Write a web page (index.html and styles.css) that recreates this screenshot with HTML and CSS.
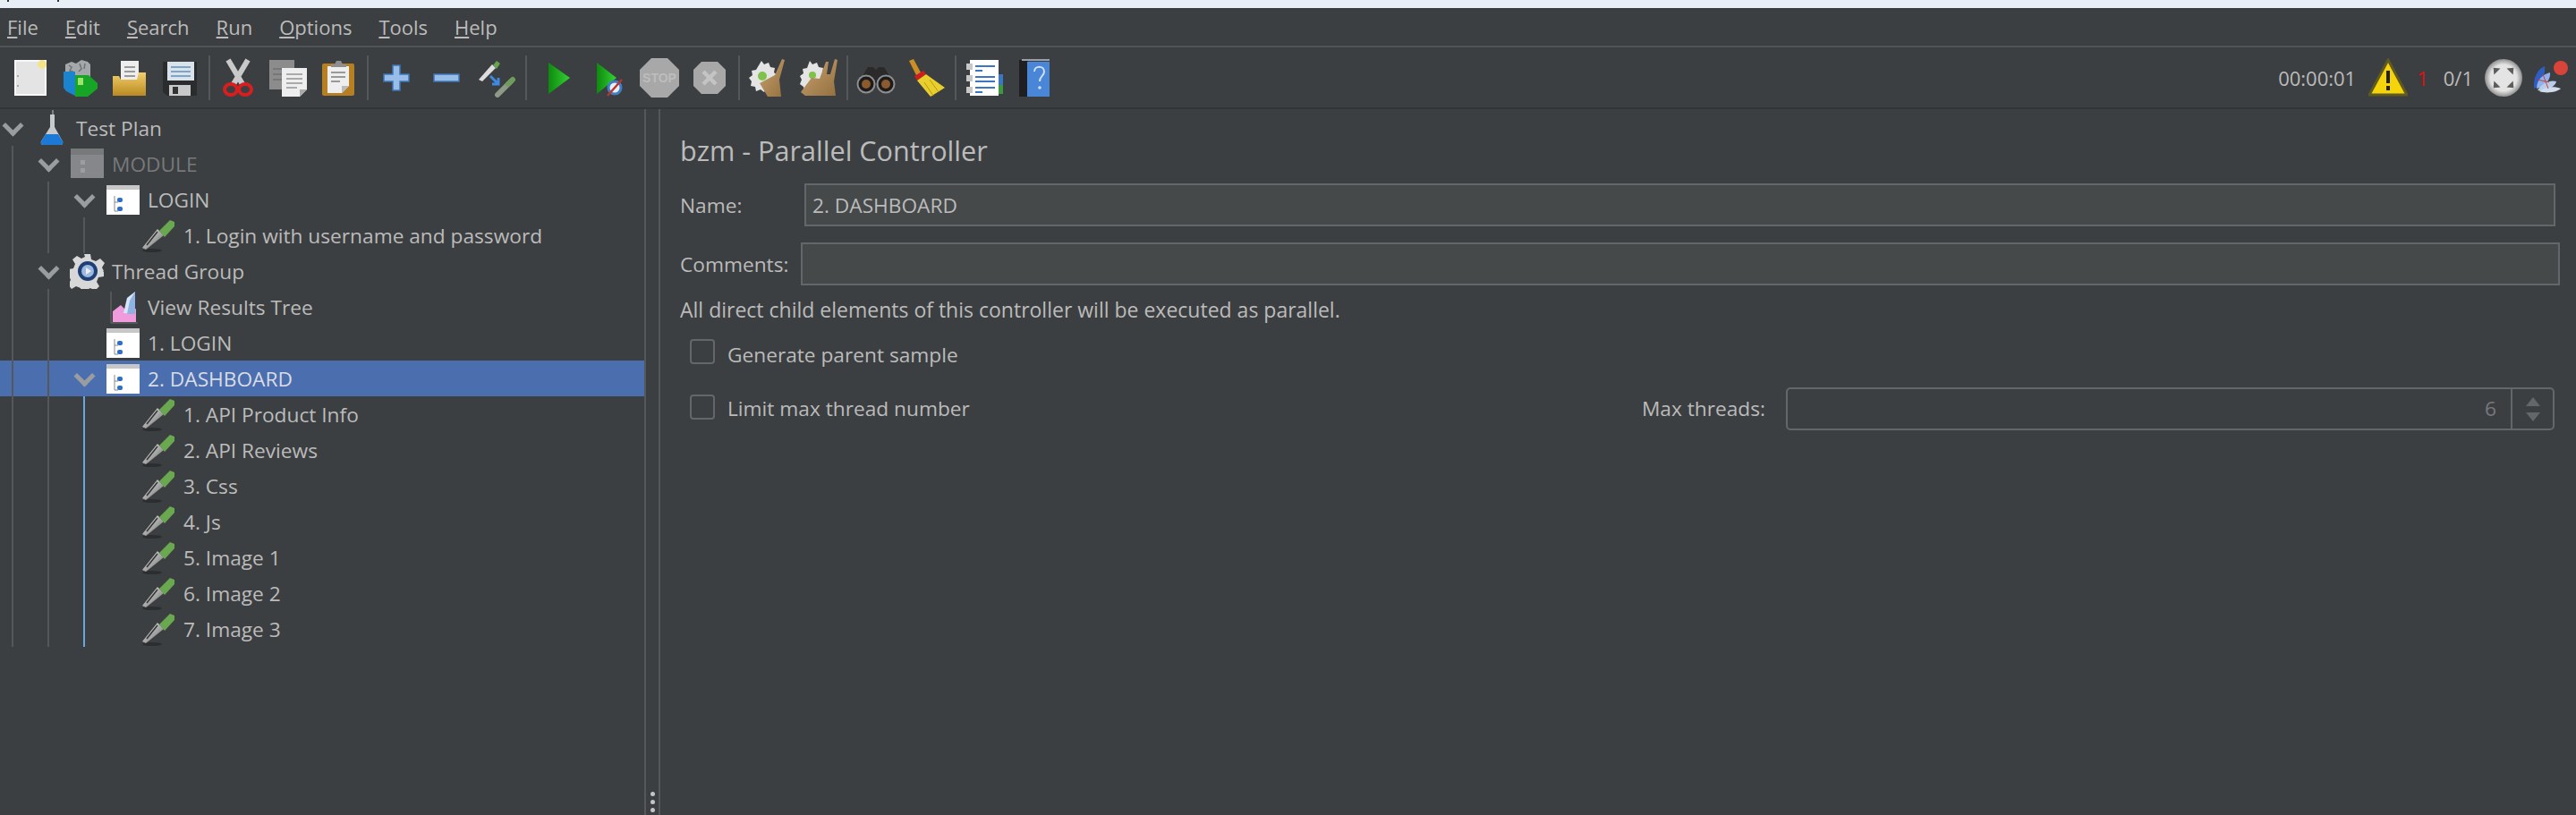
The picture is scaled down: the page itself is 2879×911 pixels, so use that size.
FILE: index.html
```html
<!DOCTYPE html>
<html lang="en">
<head>
    <meta charset="UTF-8">
    <title>bzm - Parallel Controller</title>
    <link rel="stylesheet" href="styles.css">
</head>
<body>
    <svg class="defs" xmlns="http://www.w3.org/2000/svg">
        <defs>
            <linearGradient id="gFolder" x1="0" y1="0" x2="0" y2="1"><stop offset="0" stop-color="#f3cf6b"/><stop offset="1" stop-color="#b98a22"/></linearGradient>
            <linearGradient id="gPlay" x1="0" y1="0" x2="1" y2="0"><stop offset="0" stop-color="#0d8a0d"/><stop offset="1" stop-color="#35d135"/></linearGradient>
            <linearGradient id="gWood" x1="0" y1="0" x2="1" y2="1"><stop offset="0" stop-color="#c9a271"/><stop offset="1" stop-color="#94703f"/></linearGradient>
            <linearGradient id="gGlass" x1="0" y1="0" x2="1" y2="1"><stop offset="0" stop-color="#eeeeee"/><stop offset="1" stop-color="#666666"/></linearGradient>
            <radialGradient id="gBall"><stop offset="0.7" stop-color="#e4e4e4"/><stop offset="1" stop-color="#8f8f8f"/></radialGradient>

            <symbol id="i-new" viewBox="0 0 44 44">
                <rect x="6" y="3" width="34" height="38" fill="#e4e4e4" stroke="#f8f8f8" stroke-width="2"/>
                <circle cx="9" cy="20" r="1" fill="#999"/><circle cx="9" cy="31" r="1" fill="#999"/>
                <circle cx="36" cy="7" r="5" fill="#f3e48b"/>
            </symbol>
            <symbol id="i-template" viewBox="0 0 44 44">
                <path d="M6 7l7-3 5 2 6-4 7 2 3 3v16H6z" fill="#a4a8ab"/>
                <path d="M10 8l3 2-2 4 3 1-2 4" fill="none" stroke="#6f7275" stroke-width="1.5"/>
                <path d="M22 6l2 6-3 3M28 6l-1 6" fill="none" stroke="#6f7275" stroke-width="1.5"/>
                <path d="M4 15h13v27L7 37 4 33z" fill="#1b84cf"/>
                <path d="M17 19h15l10 9v6l-11 9H17z" fill="#17a526"/>
                <rect x="20" y="22" width="6" height="8" fill="#9fe36f"/>
            </symbol>
            <symbol id="i-open" viewBox="0 0 44 44">
                <rect x="12" y="3" width="20" height="24" fill="#eeeeee"/>
                <path d="M16 10h12M16 15h12M16 20h12" stroke="#999" stroke-width="2"/>
                <path d="M3 20h7l2 4h18l2-8h8v26H3z" fill="url(#gFolder)"/>
            </symbol>
            <symbol id="i-save" viewBox="0 0 44 44">
                <path d="M3 4h38v38H8l-5-4z" fill="#2b2c2e"/>
                <rect x="8" y="4" width="30" height="21" fill="#dbe3ea"/>
                <path d="M12 10h22M12 15h22M12 20h22" stroke="#7ea4c8" stroke-width="2"/>
                <rect x="10" y="30" width="24" height="12" fill="#c9c9c9"/>
                <rect x="14" y="32" width="6" height="8" fill="#333"/>
            </symbol>
            <symbol id="i-cut" viewBox="0 0 44 44">
                <path d="M11 2l16 27M33 2L17 29" stroke="#c9c9c9" stroke-width="6"/>
                <ellipse cx="14" cy="35" rx="7" ry="6" fill="none" stroke="#d81e1e" stroke-width="4"/>
                <ellipse cx="30" cy="35" rx="7" ry="6" fill="none" stroke="#d81e1e" stroke-width="4"/>
            </symbol>
            <symbol id="i-copy" viewBox="0 0 44 44">
                <rect x="1" y="2" width="28" height="33" fill="#8c8c8c"/>
                <path d="M5 12h20M5 18h20M5 24h20" stroke="#777" stroke-width="2"/>
                <path d="M15 11h28v24l-8 8H15z" fill="#eeeeee"/>
                <path d="M20 18h18M20 23h18M20 28h18M20 33h12" stroke="#aaa" stroke-width="2"/>
                <path d="M35 43v-8h8z" fill="#aaa"/>
            </symbol>
            <symbol id="i-paste" viewBox="0 0 44 44">
                <rect x="4" y="6" width="36" height="36" rx="2" fill="#b57f22"/>
                <path d="M10 9h24v22l-8 8H10z" fill="#eeeeee"/>
                <path d="M14 16h16M14 21h16M14 26h10" stroke="#999" stroke-width="2"/>
                <path d="M26 39v-8h8z" fill="#bbb"/>
                <path d="M14 10V7h4l2-4h5l2 4h4v3z" fill="#8e8e8e"/>
            </symbol>
            <symbol id="i-plus" viewBox="0 0 44 44">
                <path d="M18 8h8v10h10v8H26v10h-8V26H8v-8h10z" fill="#98bde8" stroke="#3f76b5" stroke-width="1.5"/>
            </symbol>
            <symbol id="i-minus" viewBox="0 0 44 44">
                <rect x="8" y="18" width="28" height="8" fill="#98bde8" stroke="#3f76b5" stroke-width="1.5"/>
            </symbol>
            <symbol id="i-toggle" viewBox="0 0 44 44">
                <path d="M2 24L17 7l4 4L6 26z" fill="#dddddd"/>
                <path d="M18 8l4-5 4 3-4 6z" fill="#68a34f"/>
                <path d="M15 20l9 9M24 22v7h-7" fill="none" stroke="#3f8ae0" stroke-width="3"/>
                <path d="M23 41l15-15" stroke="#8e9a86" stroke-width="6" stroke-linecap="round"/>
                <path d="M35 29l5-5" stroke="#6f9c5a" stroke-width="6" stroke-linecap="round"/>
            </symbol>
            <symbol id="i-play" viewBox="0 0 44 44">
                <path d="M10 5l24 17-24 18z" fill="url(#gPlay)"/>
            </symbol>
            <symbol id="i-playx" viewBox="0 0 44 44">
                <path d="M8 5l22 17-22 18z" fill="url(#gPlay)"/>
                <circle cx="28" cy="33" r="8" fill="#e8eef5"/>
                <circle cx="28" cy="33" r="7" fill="none" stroke="#3f7ec4" stroke-width="3"/>
                <path d="M20 42l16-18" stroke="#b8342c" stroke-width="2.5"/>
            </symbol>
            <symbol id="i-stop" viewBox="0 0 44 44">
                <path d="M13 0h18l13 13v18L31 44H13L0 31V13z" fill="#a8a8a8"/>
                <text x="22" y="27" text-anchor="middle" class="stop-text">STOP</text>
            </symbol>
            <symbol id="i-shut" viewBox="0 0 44 44">
                <path d="M13 4h18l9 9v18l-9 9H13l-9-9V13z" fill="#a8a8a8"/>
                <path d="M15 15l14 14M29 15L15 29" stroke="#c4c4c4" stroke-width="4.5"/>
            </symbol>
            <symbol id="i-clear" viewBox="0 0 44 44">
                <path d="M15 3l3 4 5-2 2 5 5 1-1 5 4 3-3 4 2 5-5 2-1 5-5-1-3 4-4-3-5 2-1-5-5-1 1-5-3-4 4-3-1-5 5-1z" fill="#e4e4e4"/>
                <circle cx="16" cy="20" r="5" fill="#7fc24a"/>
                <path d="M38 1l3 1-6 22 2 19H22L13 28l17-9z" fill="url(#gWood)"/>
            </symbol>
            <symbol id="i-clearall" viewBox="0 0 44 44">
                <path d="M13 3l3 4 5-2 2 5 5 1-1 5 4 3-3 4 2 5-5 2-1 5-5-1-3 4-4-3-5 2-1-5-4-3 2-5-2-4 4-3-1-5 5-1z" fill="#e4e4e4"/>
                <circle cx="16" cy="19" r="4" fill="#7fc24a"/>
                <path d="M41 1l3 1-4 24 2 16H8L3 38l12-16 9 1 7-19 3 0-2 14 4 0z" fill="url(#gWood)"/>
            </symbol>
            <symbol id="i-search" viewBox="0 0 44 44">
                <path d="M13 10h6l3 3 3-3h6l11 18H2z" fill="#2a2a2a"/>
                <circle cx="11" cy="29" r="9.5" fill="#1c1c1c" stroke="#8e8e8e" stroke-width="2"/>
                <circle cx="33" cy="29" r="9.5" fill="#1c1c1c" stroke="#8e8e8e" stroke-width="2"/>
                <circle cx="11" cy="29" r="5" fill="#8d5a2e"/>
                <circle cx="33" cy="29" r="5" fill="#8d5a2e"/>
            </symbol>
            <symbol id="i-broom" viewBox="0 0 44 44">
                <path d="M3 3l5-2 9 17-5 3z" fill="#c98f25"/>
                <path d="M9 20l10-6 3 4-10 7z" fill="#cc1e1e"/>
                <path d="M12 25l10-7 21 15-16 10z" fill="#e9cf2d"/>
                <path d="M20 27l10 15M26 24l10 14" stroke="#b99a13" stroke-width="1"/>
            </symbol>
            <symbol id="i-log" viewBox="0 0 44 44">
                <rect x="36" y="18" width="7" height="12" fill="#3a76c4"/>
                <rect x="36" y="30" width="7" height="10" fill="#3c9a3c"/>
                <rect x="6" y="2" width="32" height="40" fill="#ffffff"/>
                <path d="M12 9h22M12 14h8M12 21h22M12 26h22M12 33h22M12 38h8" stroke="#3a76c4" stroke-width="2"/>
                <rect x="2" y="6" width="7" height="7" fill="#c8c8c8"/>
                <rect x="2" y="19" width="7" height="7" fill="#c8c8c8"/>
                <rect x="2" y="32" width="7" height="7" fill="#c8c8c8"/>
            </symbol>
            <symbol id="i-help" viewBox="0 0 44 44">
                <rect x="5" y="2" width="10" height="41" fill="#1d1f22"/>
                <rect x="14" y="4" width="25" height="39" fill="#4a86d8"/>
                <rect x="8" y="1" width="31" height="2" fill="#9aa0a6"/>
                <path d="M22 15c0-7 11-7 11 0 0 5-5 5-5 11" fill="none" stroke="#cfe0f6" stroke-width="2"/>
                <circle cx="28" cy="33" r="1.8" fill="#cfe0f6"/>
            </symbol>
            <symbol id="i-warn" viewBox="0 0 44 44">
                <path d="M22 2L43 41H1z" fill="#f6d40c" stroke="#5f5a20" stroke-width="3"/>
                <path d="M22 14v14" stroke="#222" stroke-width="4"/>
                <rect x="20" y="31" width="4" height="5" fill="#222"/>
            </symbol>
            <symbol id="i-ball" viewBox="0 0 44 44">
                <circle cx="22" cy="22" r="21" fill="url(#gBall)"/>
                <path d="M22 6l5 6H17zM22 38l5-6H17zM6 22l6-5v10zM38 22l-6-5v10z" fill="#5c5c5c" transform="rotate(45 22 22)"/>
            </symbol>
            <symbol id="i-feather" viewBox="0 0 44 44">
                <path d="M2 34C1 22 6 12 14 9c1 9-3 22-12 25z" fill="#2f5dc2"/>
                <path d="M5 34c0-10 7-16 15-18 1 7-5 16-15 18z" fill="#8fb2ea"/>
                <path d="M6 36c5-8 14-12 21-10-1 6-12 12-21 10z" fill="#b9cdea"/>
                <path d="M8 37c6-5 17-6 24-3-4 4-16 6-24 3z" fill="#cfdceb"/>
                <path d="M6 24l13 3M12 18l6 16" stroke="#c8413a" stroke-width="1"/>
                <circle cx="32" cy="11" r="8" fill="#d9443a"/>
            </symbol>

            <symbol id="t-flask" viewBox="0 0 40 40">
                <path d="M21 0v6" stroke="#999" stroke-width="1.5"/>
                <path d="M18 5h5v14l9 16c1 3-1 4-3 4H11c-2 0-4-1-3-4l10-16z" fill="#c6cacd"/>
                <path d="M13 27h14l5 8c1 3-1 4-3 4H11c-2 0-4-1-3-4z" fill="#1c79d6"/>
            </symbol>
            <symbol id="t-module" viewBox="0 0 40 40">
                <rect x="1" y="3" width="37" height="33" fill="#85878a"/>
                <rect x="1" y="3" width="37" height="7" fill="#77797b"/>
                <path d="M12 16h5v5h-5zM12 25h5v5h-5z" fill="#9b9d9f"/>
            </symbol>
            <symbol id="t-ctrl" viewBox="0 0 40 40">
                <rect x="1" y="4" width="37" height="33" fill="#ffffff"/>
                <rect x="1" y="4" width="37" height="5" fill="#c7c7c7"/>
                <path d="M10 16v17h4M10 23h4" fill="none" stroke="#888" stroke-width="1"/>
                <rect x="13" y="18" width="6" height="5" rx="2" fill="#2c6fc9"/>
                <rect x="13" y="28" width="6" height="5" rx="2" fill="#2c6fc9"/>
            </symbol>
            <symbol id="t-dropper" viewBox="0 0 40 40">
                <ellipse cx="12" cy="37" rx="11" ry="2" fill="#2c2d2e"/>
                <path d="M1 34L18 13l7 7L5 36z" fill="url(#gGlass)"/>
                <path d="M6 31L18 16" stroke="#333" stroke-width="1.5"/>
                <path d="M20 15L32 3l5 2v5L26 22z" fill="#69a84f"/>
            </symbol>
            <symbol id="t-gear" viewBox="0 0 40 40">
                <path d="M16 1h7l1 6 5 2 5-3 5 5-3 5 2 4h-1l1 1v5l-6 1-2 5 3 5-5 5-5-3-4 2-1 3h-5l-1-5-5-2-5 3-4-5 3-5-2-5-1-1v-6l6-1 2-5-3-5 5-4 5 3 4-2z" fill="#d8d8d8"/>
                <circle cx="20" cy="20" r="11" fill="#1f3f78"/>
                <circle cx="20" cy="20" r="7" fill="#9fb9de"/>
                <path d="M18 16l6 4-6 4z" fill="#e9f0fa"/>
            </symbol>
            <symbol id="t-results" viewBox="0 0 40 40">
                <path d="M6 3v35h30" fill="none" stroke="#6d6f71" stroke-width="1"/>
                <path d="M8 37V25l9-7 7 7 10-3v15z" fill="#ef9bdc"/>
                <path d="M20 27l4-17 9-7v25z" fill="#d6e6f8"/>
                <path d="M24 28l3-15 6-10v25z" fill="#8fb2e0"/>
            </symbol>
        </defs>
    </svg>

    <div class="top-strip"><i></i><i></i></div>

    <div class="menubar">
        <span><u>F</u>ile</span>
        <span><u>E</u>dit</span>
        <span><u>S</u>earch</span>
        <span><u>R</u>un</span>
        <span><u>O</u>ptions</span>
        <span><u>T</u>ools</span>
        <span><u>H</u>elp</span>
    </div>

    <div class="toolbar">
        <div class="tool"><svg><use href="#i-new"/></svg></div>
        <div class="tool"><svg><use href="#i-template"/></svg></div>
        <div class="tool"><svg><use href="#i-open"/></svg></div>
        <div class="tool"><svg><use href="#i-save"/></svg></div>
        <div class="sep"></div>
        <div class="tool"><svg><use href="#i-cut"/></svg></div>
        <div class="tool"><svg><use href="#i-copy"/></svg></div>
        <div class="tool"><svg><use href="#i-paste"/></svg></div>
        <div class="sep"></div>
        <div class="tool"><svg><use href="#i-plus"/></svg></div>
        <div class="tool"><svg><use href="#i-minus"/></svg></div>
        <div class="tool"><svg><use href="#i-toggle"/></svg></div>
        <div class="sep sep-wide"></div>
        <div class="tool"><svg><use href="#i-play"/></svg></div>
        <div class="tool"><svg><use href="#i-playx"/></svg></div>
        <div class="tool"><svg><use href="#i-stop"/></svg></div>
        <div class="tool"><svg><use href="#i-shut"/></svg></div>
        <div class="sep"></div>
        <div class="tool"><svg><use href="#i-clear"/></svg></div>
        <div class="tool"><svg><use href="#i-clearall"/></svg></div>
        <div class="sep"></div>
        <div class="tool"><svg><use href="#i-search"/></svg></div>
        <div class="tool"><svg><use href="#i-broom"/></svg></div>
        <div class="sep"></div>
        <div class="tool"><svg><use href="#i-log"/></svg></div>
        <div class="tool"><svg><use href="#i-help"/></svg></div>

        <div class="status">
            <span class="timer">00:00:01</span>
            <svg class="stat-icon"><use href="#i-warn"/></svg>
            <span class="err-count">1</span>
            <span class="threads">0/1</span>
            <svg class="stat-icon"><use href="#i-ball"/></svg>
            <svg class="stat-icon"><use href="#i-feather"/></svg>
        </div>
    </div>

    <div class="workspace">
        <div class="tree">
            <div class="guide g1"></div>
            <div class="guide g2"></div>
            <div class="guide g3"></div>
            <div class="guide g4"></div>
            <div class="guide g5"></div>

            <div class="row"><span class="chev"></span><svg class="ti"><use href="#t-flask"/></svg><span>Test Plan</span></div>
            <div class="row l1 off"><span class="chev"></span><svg class="ti"><use href="#t-module"/></svg><span>MODULE</span></div>
            <div class="row l2"><span class="chev"></span><svg class="ti"><use href="#t-ctrl"/></svg><span>LOGIN</span></div>
            <div class="row l3 leaf"><span class="chev"></span><svg class="ti"><use href="#t-dropper"/></svg><span>1. Login with username and password</span></div>
            <div class="row l1"><span class="chev"></span><svg class="ti"><use href="#t-gear"/></svg><span>Thread Group</span></div>
            <div class="row l2 leaf"><span class="chev"></span><svg class="ti"><use href="#t-results"/></svg><span>View Results Tree</span></div>
            <div class="row l2 leaf"><span class="chev"></span><svg class="ti"><use href="#t-ctrl"/></svg><span>1. LOGIN</span></div>
            <div class="row l2 selected"><span class="chev"></span><svg class="ti"><use href="#t-ctrl"/></svg><span>2. DASHBOARD</span></div>
            <div class="row l3 leaf"><span class="chev"></span><svg class="ti"><use href="#t-dropper"/></svg><span>1. API Product Info</span></div>
            <div class="row l3 leaf"><span class="chev"></span><svg class="ti"><use href="#t-dropper"/></svg><span>2. API Reviews</span></div>
            <div class="row l3 leaf"><span class="chev"></span><svg class="ti"><use href="#t-dropper"/></svg><span>3. Css</span></div>
            <div class="row l3 leaf"><span class="chev"></span><svg class="ti"><use href="#t-dropper"/></svg><span>4. Js</span></div>
            <div class="row l3 leaf"><span class="chev"></span><svg class="ti"><use href="#t-dropper"/></svg><span>5. Image 1</span></div>
            <div class="row l3 leaf"><span class="chev"></span><svg class="ti"><use href="#t-dropper"/></svg><span>6. Image 2</span></div>
            <div class="row l3 leaf"><span class="chev"></span><svg class="ti"><use href="#t-dropper"/></svg><span>7. Image 3</span></div>
        </div>

        <div class="divider">
            <i></i><i></i><i></i>
        </div>

        <div class="panel">
            <div class="title">bzm - Parallel Controller</div>
            <div class="field-row name-row">
                <label class="name-label">Name:</label>
                <div class="input">2. DASHBOARD</div>
            </div>
            <div class="field-row comments-row">
                <label class="comments-label">Comments:</label>
                <div class="input"></div>
            </div>
            <div class="hint">All direct child elements of this controller will be executed as parallel.</div>
            <div class="check-row">
                <span class="checkbox"></span>
                <span>Generate parent sample</span>
            </div>
            <div class="check-row limit-row">
                <span class="checkbox"></span>
                <span>Limit max thread number</span>
                <div class="max-threads">
                    <label>Max threads:</label>
                    <div class="spinner">
                        <span class="spin-value">6</span>
                        <div class="spin-arrows"><b class="up"></b><b class="down"></b></div>
                    </div>
                </div>
            </div>
        </div>
    </div>
</body>
</html>
```

FILE: styles.css
```css
* {
    box-sizing: border-box;
}
html, body {
    height: 100%;
}
body {
    margin: 0;
    overflow: hidden;
    display: flex;
    flex-direction: column;
    background: #3c3f41;
    color: #bbbbbb;
    font-family: 'Open Sans', 'Noto Sans', sans-serif;
    font-size: 22px;
}
.defs {
    position: absolute;
    width: 0;
    height: 0;
}
.stop-text {
    font-family: 'Liberation Sans', sans-serif;
    font-size: 14px;
    font-weight: bold;
    fill: #bdbdbd;
}
.top-strip {
    height: 9px;
    background: #e9eff7;
    display: flex;
    align-items: flex-start;
    gap: 54px;
    padding-left: 8px;
}
.top-strip i {
    width: 2px;
    height: 2px;
    background: #333;
}
.menubar {
    height: 44px;
    display: flex;
    align-items: center;
    gap: 30px;
    padding-left: 8px;
    border-bottom: 2px solid #515355;
}
.toolbar {
    height: 69px;
    display: flex;
    align-items: center;
    padding-left: 5px;
    border-bottom: 2px solid #333537;
}
.tool {
    width: 56px;
    display: flex;
    justify-content: center;
}
.tool svg {
    width: 44px;
    height: 44px;
}
.sep {
    width: 2px;
    height: 50px;
    margin: 0 3px 0 4px;
    background: #55585a;
}
.sep-wide {
    margin-right: 8px;
}
.status {
    margin-left: auto;
    display: flex;
    align-items: center;
    padding-right: 12px;
}
.timer {
    margin-right: 14px;
}
.stat-icon {
    width: 44px;
    height: 44px;
}
.err-count {
    color: #e01010;
    margin: 0 17px 0 10px;
}
.threads {
    margin-right: 12px;
}
.stat-icon + .stat-icon {
    margin-left: 10px;
    margin-right: -7px;
}
.workspace {
    flex: 1;
    display: flex;
    min-height: 0;
}
.tree {
    position: relative;
    width: 720px;
    padding-top: 1px;
    font-size: 22.7px;
}
.row {
    height: 40px;
    display: flex;
    align-items: center;
    white-space: nowrap;
}
.l1 { padding-left: 40px; }
.l2 { padding-left: 80px; }
.l3 { padding-left: 120px; }
.off {
    color: #77797b;
}
.selected {
    background: #4b6eaf;
    color: #d8dce4;
}
.chev {
    width: 38px;
    height: 40px;
    position: relative;
    flex: none;
}
.chev::before {
    content: "";
    position: absolute;
    left: 6px;
    top: 9px;
    width: 12px;
    height: 12px;
    border-right: 5px solid #9a9d9f;
    border-bottom: 5px solid #9a9d9f;
    transform: rotate(45deg);
}
.leaf .chev::before {
    display: none;
}
.ti {
    width: 40px;
    height: 40px;
    flex: none;
    margin-right: 7px;
}
.guide {
    position: absolute;
    width: 2px;
    background: #55585a;
    z-index: 1;
}
.g1 { left: 13px; top: 41px; height: 560px; }
.g2 { left: 53px; top: 81px; height: 80px; }
.g3 { left: 53px; top: 201px; height: 400px; }
.g4 { left: 93px; top: 321px; height: 280px; background: #6aa7e0; }
.g5 { left: 93px; top: 121px; height: 40px; }
.divider {
    width: 18px;
    flex: none;
    border-left: 2px solid #55585a;
    border-right: 2px solid #55585a;
    position: relative;
}
.divider i {
    display: block;
    position: absolute;
    left: 5px;
    width: 5px;
    height: 5px;
    border-radius: 50%;
    background: #c4c4c4;
}
.divider i:nth-child(1) { bottom: 21px; }
.divider i:nth-child(2) { bottom: 12px; }
.divider i:nth-child(3) { bottom: 3px; }
.panel {
    flex: 1;
    padding: 26px 18px 0 22px;
    font-size: 22.7px;
}
.title {
    font-size: 30.6px;
    line-height: 40px;
    margin-bottom: 17px;
}
.field-row {
    display: flex;
    align-items: center;
    height: 48px;
}
.name-row {
    margin-right: 5px;
}
.comments-row {
    margin-top: 18px;
}
.name-label { width: 139px; }
.comments-label { width: 135px; }
.input {
    flex: 1;
    height: 48px;
    line-height: 46px;
    padding-left: 7px;
    background: #45494a;
    border: 2px solid #646769;
}
.hint {
    height: 30px;
    line-height: 28px;
    margin-top: 13px;
    margin-bottom: 17px;
    font-size: 23px;
}
.check-row {
    display: flex;
    align-items: flex-start;
    line-height: 36px;
    height: 36px;
    padding-left: 11px;
}
.checkbox {
    width: 28px;
    height: 28px;
    margin-right: 14px;
    border: 2px solid #646769;
    border-radius: 4px;
    flex: none;
}
.limit-row {
    height: 48px;
    line-height: 50px;
    margin-top: 18px;
    align-items: center;
}
.limit-row .checkbox {
    margin-bottom: 4px;
}
.max-threads {
    margin-left: auto;
    display: flex;
    align-items: center;
    gap: 23px;
    margin-right: 6px;
}
.spinner {
    width: 859px;
    height: 48px;
    display: flex;
    border: 2px solid #646769;
    border-radius: 5px;
}
.spin-value {
    flex: 1;
    text-align: right;
    padding-right: 16px;
    line-height: 44px;
    color: #77797b;
}
.spin-arrows {
    width: 47px;
    border-left: 2px solid #646769;
    display: flex;
    flex-direction: column;
    align-items: center;
    justify-content: center;
    gap: 7px;
}
.up, .down {
    width: 0;
    height: 0;
    border-left: 8px solid transparent;
    border-right: 8px solid transparent;
}
.up { border-bottom: 10px solid #646769; }
.down { border-top: 10px solid #646769; }
```
